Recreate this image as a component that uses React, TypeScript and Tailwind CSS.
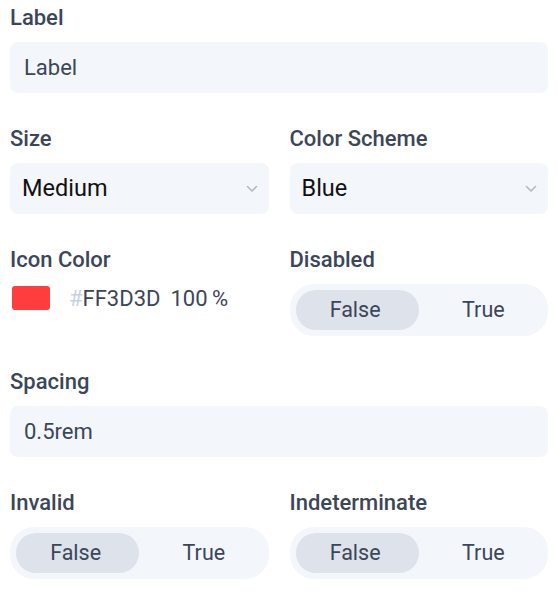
import React from "react";

const labelCls =
  "text-[22px] leading-[36px] font-medium text-[#3b4658]";
const boxCls =
  "h-[51px] rounded-[8px] bg-[#f3f6fb] px-[14px] flex items-center text-[22px] text-[#3b4658]";

function Field({
  label,
  children,
  wide,
}: {
  label: string;
  children: React.ReactNode;
  wide?: boolean;
}) {
  return (
    <div className={"flex flex-col gap-[6px]" + (wide ? " col-span-2" : "")}>
      <div className={labelCls}>{label}</div>
      {children}
    </div>
  );
}

function Chevron() {
  return (
    <svg width="12" height="8" viewBox="0 0 12 8" fill="none">
      <path
        d="M1.5 1.5 L6 6 L10.5 1.5"
        stroke="#b5b8bd"
        strokeWidth="1.6"
        strokeLinecap="round"
        strokeLinejoin="round"
      />
    </svg>
  );
}

function Select({ value }: { value: string }) {
  return (
    <div className="h-[51px] rounded-[8px] bg-[#f3f6fb] pl-[12px] pr-[11px] flex items-center justify-between">
      <span className="text-[23.5px] text-[#111111]">{value}</span>
      <Chevron />
    </div>
  );
}

function Segmented() {
  return (
    <div className="h-[52px] rounded-[24px] bg-[#f3f6fb] p-[6px] grid grid-cols-2 text-[21.5px] text-[#3b4658]">
      <div className="rounded-full bg-[#dde2eb] flex items-center justify-center pr-[4px]">
        False
      </div>
      <div className="flex items-center justify-center pl-[6px]">True</div>
    </div>
  );
}

export default function App() {
  return (
    <div
      className="w-[558px] h-[594px] bg-white px-[10px] grid grid-cols-2 gap-x-[21px] gap-y-[28px] content-start"
      style={{ fontFamily: "Roboto, 'Liberation Sans', sans-serif" }}
    >
      <Field label="Label" wide>
        <div className={boxCls}>Label</div>
      </Field>
      <Field label="Size">
        <Select value="Medium" />
      </Field>
      <Field label="Color Scheme">
        <Select value="Blue" />
      </Field>
      <Field label="Icon Color">
        <div className="h-[28px] flex items-center text-[22px]">
          <div className="w-[38px] h-[24px] ml-[2px] rounded-[3px] bg-[#ff3d3d]" />
          <span className="ml-[19px] text-[#c9d1e2]">#</span>
          <span className="text-[#3b4658]">FF3D3D</span>
          <span className="ml-[10px] text-[#3b4658]">100{"\u2009"}%</span>
        </div>
      </Field>
      <Field label="Disabled">
        <Segmented />
      </Field>
      <Field label="Spacing" wide>
        <div className={boxCls}>0.5rem</div>
      </Field>
      <Field label="Invalid">
        <Segmented />
      </Field>
      <Field label="Indeterminate">
        <Segmented />
      </Field>
    </div>
  );
}
